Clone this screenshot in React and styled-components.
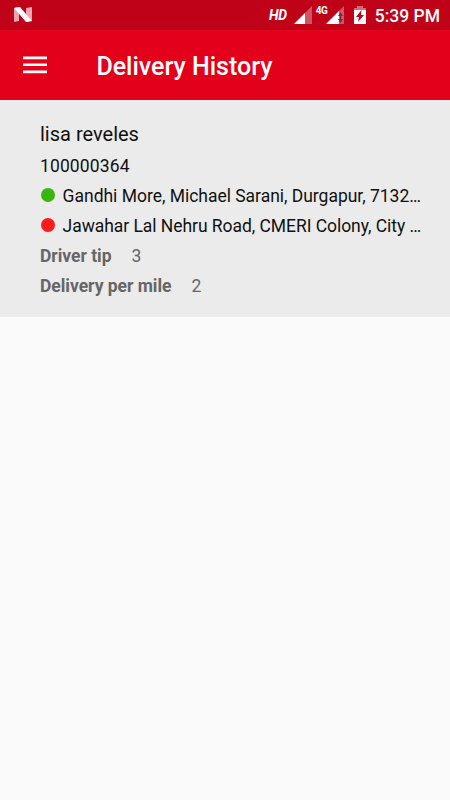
import React from 'react';
import styled, { createGlobalStyle } from 'styled-components';

const GlobalStyle = createGlobalStyle`
  * { box-sizing: border-box; }
  body { margin: 0; background: #fafafa; font-family: Roboto, sans-serif; }
`;

const Screen = styled.div`
  width: 450px;
  height: 800px;
  overflow: hidden;
  background: #fafafa;
`;

const StatusBar = styled.div`
  display: flex;
  align-items: center;
  height: 30px;
  padding: 0 10px 0 13px;
  background: #c00219;
  color: #fff;
`;

const StatusIcons = styled.div`
  display: flex;
  align-items: center;
  height: 30px;
  margin-left: auto;
`;

const HdLabel = styled.span`
  margin-right: 7px;
  font: italic 700 14px/30px Roboto, sans-serif;
  letter-spacing: -0.4px;
`;

const NetworkLabel = styled.span`
  align-self: flex-start;
  width: 12px;
  margin: 5px -2px 0 4px;
  font: 700 10px/12px Roboto, sans-serif;
  letter-spacing: -0.5px;
`;

const Clock = styled.span`
  margin-left: 9px;
  padding-top: 2px;
  font-size: 17.5px;
  font-weight: 500;
  line-height: 30px;
  white-space: nowrap;
`;

const Icon = styled.svg`
  display: block;
  flex: none;
`;

const BatteryIcon = styled(Icon)`
  margin-left: 10px;
`;

const AppBar = styled.header`
  display: flex;
  align-items: center;
  height: 70px;
  padding: 0 23px;
  background: #e3001b;
  color: #fff;
`;

const MenuButton = styled.button`
  width: 24px;
  height: 18px;
  margin: 0 49.4px 0 0;
  padding: 0;
  border: 0;
  background: none;
`;

const Title = styled.h1`
  margin: 3px 0 0;
  font-size: 25px;
  font-weight: 500;
  line-height: 32px;
`;

const DeliveryCard = styled.section`
  height: 217px;
  padding: 18px 25px 0 40px;
  background: #ebebeb;
  color: #111;
`;

const CustomerName = styled.h2`
  margin: 0;
  font-size: 20px;
  font-weight: 400;
  line-height: 33px;
`;

const Row = styled.div`
  display: flex;
  align-items: center;
  height: 30px;
  font-size: 17.5px;
  line-height: 30px;
  letter-spacing: ${({ $spacing = 0 }) => $spacing}px;
  white-space: pre;
`;

const StatusDot = styled.span`
  flex: none;
  width: 14px;
  height: 14px;
  margin: 0 7.6px 2px 1px;
  border-radius: 50%;
  background: ${({ $color }) => $color};
`;

const Detail = styled(Row)`
  gap: 20px;
  color: #666;
`;

const DetailLabel = styled.span`
  font-weight: 700;
`;

function Signal({ data }) {
  return (
    <Icon width="18" height="18" viewBox="0 0 18 18">
      <path d="M0 18 18 0V18Z" fill="#fff" fillOpacity="0.32" />
      {data ? (
        <>
          <path d="M0 18 13 5V18Z" fill="#fff" />
          <path d="M14.5 6.5 17 10H12ZM14.5 17 12 13H17ZM14 9H15V14H14Z" fill="#702c35" />
        </>
      ) : (
        <path d="M0 18 11 7V18Z" fill="#fff" />
      )}
    </Icon>
  );
}

export default function App() {
  return (
    <>
      <GlobalStyle />
      <Screen>
        <StatusBar>
          <Icon width="20" height="16" viewBox="0 0 20 16">
            <path d="M1 1 6 0V14L1 15ZM13 1 19 0V14L13 15Z" fill="#fff" fillOpacity="0.65" />
            <path d="M1 1 7 0 19 14 13 15Z" fill="#fff" />
          </Icon>
          <StatusIcons>
            <HdLabel>HD</HdLabel>
            <Signal />
            <NetworkLabel>4G</NetworkLabel>
            <Signal data />
            <BatteryIcon width="12" height="18" viewBox="0 0 12 18">
              <path d="M3 0H9V2H12V4H0V2H3Z" fill="#fff" fillOpacity="0.4" />
              <path d="M0 4H12V18H0Z" fill="#fff" />
              <path d="M7.5 4 2 11H5L4 16 10 9H7Z" fill="#c00219" />
            </BatteryIcon>
            <Clock>5:39 PM</Clock>
          </StatusIcons>
        </StatusBar>
        <AppBar>
          <MenuButton aria-label="Menu">
            <Icon width="24" height="18" viewBox="0 0 24 18">
              <path d="M0 0.5H24V3.2H0ZM0 7.4H24V10.1H0ZM0 14.5H24V17.2H0Z" fill="#fff" />
            </Icon>
          </MenuButton>
          <Title>Delivery History</Title>
        </AppBar>
        <DeliveryCard>
          <CustomerName>lisa reveles</CustomerName>
          <Row $spacing={0.12}>100000364</Row>
          <Row $spacing={-0.02}><StatusDot $color="#38b60d" />Gandhi More, Michael Sarani, Durgapur, 7132…</Row>
          <Row $spacing={-0.05}><StatusDot $color="#ff1c1c" />Jawahar Lal Nehru Road, CMERI Colony, City …</Row>
          <Detail $spacing={-0.03}><DetailLabel>Driver tip</DetailLabel><span>3</span></Detail>
          <Detail $spacing={-0.03}><DetailLabel>Delivery per mile</DetailLabel><span>2</span></Detail>
        </DeliveryCard>
      </Screen>
    </>
  );
}
